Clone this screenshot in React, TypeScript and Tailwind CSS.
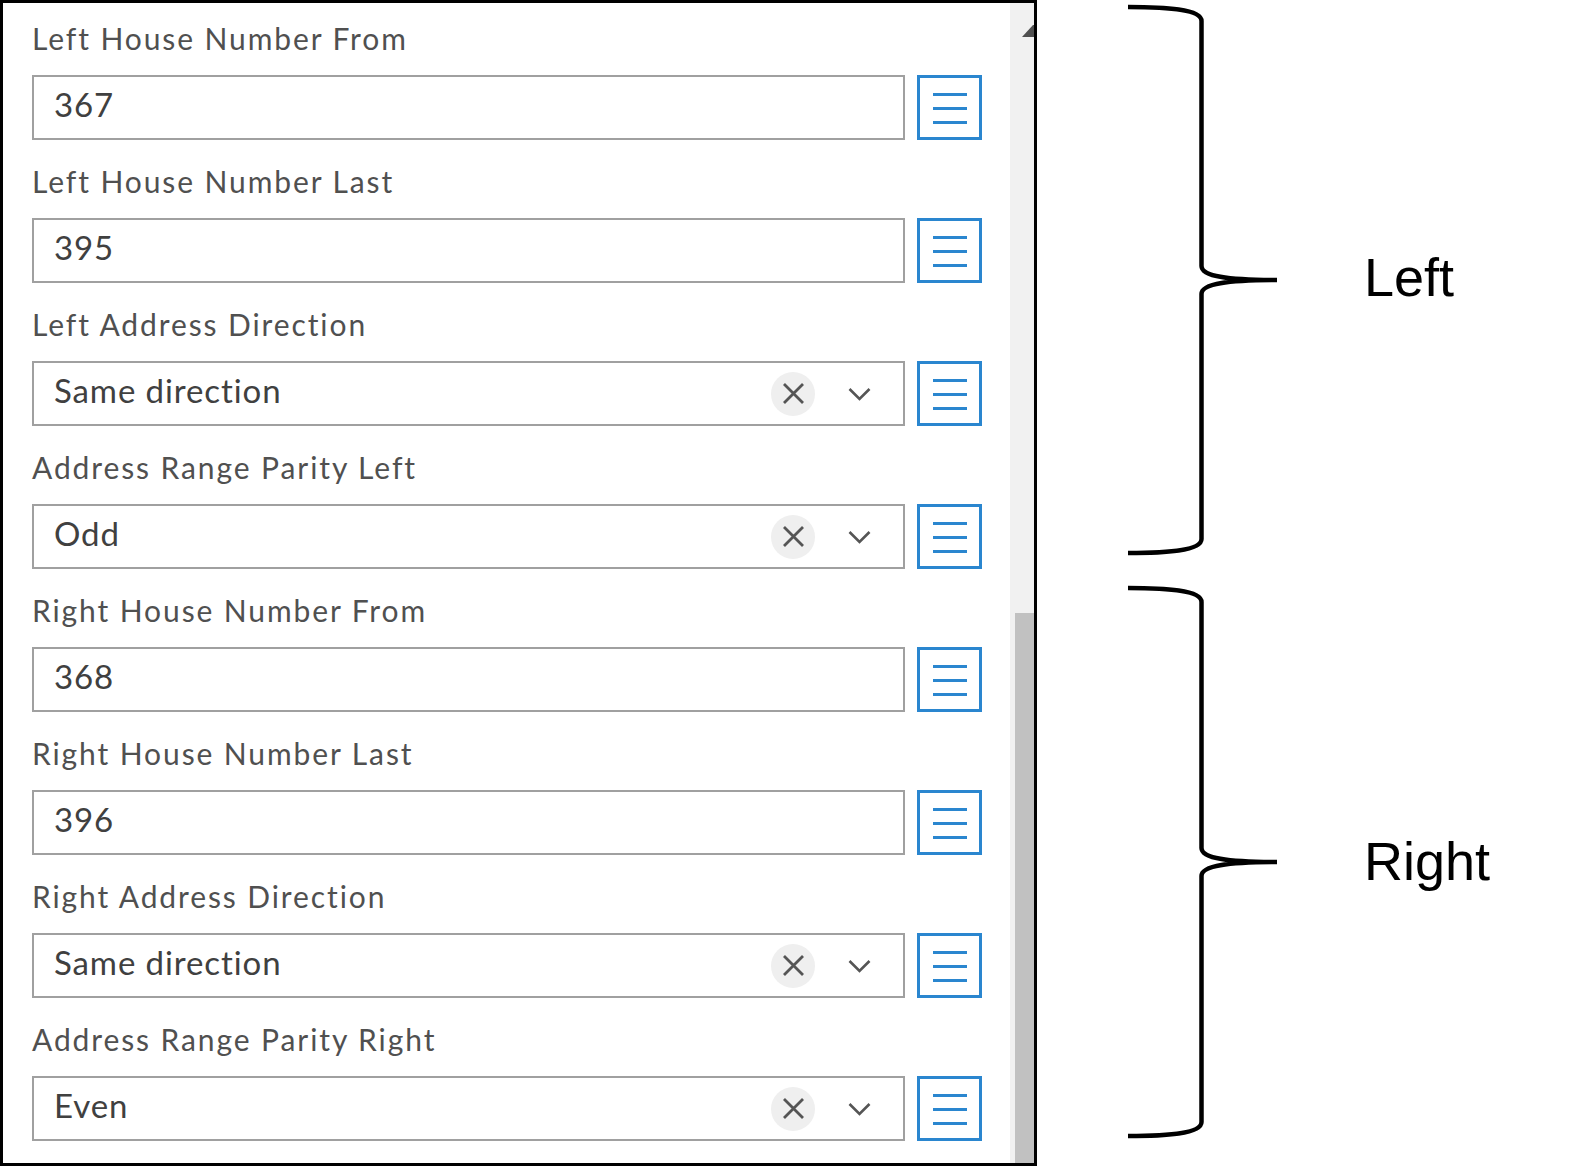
import React from "react";

interface Field {
    label: string;
    value: string;
    select?: boolean;
}

const fields: Field[] = [
    { label: "Left House Number From", value: "367" },
    { label: "Left House Number Last", value: "395" },
    { label: "Left Address Direction", value: "Same direction", select: true },
    { label: "Address Range Parity Left", value: "Odd", select: true },
    { label: "Right House Number From", value: "368" },
    { label: "Right House Number Last", value: "396" },
    { label: "Right Address Direction", value: "Same direction", select: true },
    { label: "Address Range Parity Right", value: "Even", select: true },
];

const MenuButton = () => (
    <div className="w-[65px] h-[65px] shrink-0 border-[3px] border-[#2a86cf] flex items-center justify-center">
        <svg width="34" height="31" viewBox="0 0 34 31" className="mt-[2px]">
            <path d="M0 1.5H34M0 15.5H34M0 29.5H34" stroke="#2a86cf" strokeWidth="3" />
        </svg>
    </div>
);

const SelectControls = () => (
    <div className="flex items-center ml-auto pr-[32px]">
        <div className="w-[44px] h-[44px] rounded-full bg-[#efefef] flex items-center justify-center">
            <svg width="23" height="23" viewBox="0 0 23 23">
                <path d="M2 2L21 21M21 2L2 21" stroke="#555" strokeWidth="2.8" />
            </svg>
        </div>
        <svg width="23" height="14" viewBox="0 0 23 14" className="ml-[33px]">
            <path d="M1.5 2L11.5 12L21.5 2" stroke="#555" strokeWidth="2.6" fill="none" />
        </svg>
    </div>
);

const FieldRow = ({ label, value, select }: Field) => (
    <div className="flex flex-col">
        <div className="h-[40px] flex items-center pb-[4px] text-[30px] text-[#505050] font-['Lato',sans-serif] tracking-[1.9px]">
            {label}
        </div>
        <div className="mt-[15px] flex gap-[12px]">
            <div className="flex-1 h-[65px] border-2 border-[#a0a0a0] flex items-center pl-[20px]">
                <span className="text-[33px] text-[#404040] font-['Lato',sans-serif] tracking-[0.9px] pb-[6px]">{value}</span>
                {select && <SelectControls />}
            </div>
            <MenuButton />
        </div>
    </div>
);

const Brace = ({ t, m, b }: { t: number; m: number; b: number }) => (
    <svg width="170" height="560" viewBox="0 0 170 560" className="shrink-0">
        <path
            d={`M8 ${t} C45 ${t} 81.5 ${t + 2} 81.5 ${t + 14} V ${m - 14} C81.5 ${m - 3} 110 ${m} 157 ${m} M157 ${m} C110 ${m} 81.5 ${m + 3} 81.5 ${m + 14} V ${b - 14} C81.5 ${b - 2} 45 ${b} 8 ${b}`}
            stroke="#000"
            strokeWidth="4.5"
            fill="none"
        />
    </svg>
);

const App = () => {
    return (
        <div className="w-[1581px] h-[1168px] bg-white flex items-start overflow-hidden">
            <div className="w-[1037px] h-[1166px] border-[3px] border-black flex shrink-0">
                <div className="flex-1 overflow-hidden pl-[29px] pr-[28px] pt-[17px] flex flex-col gap-[23px]">
                    {fields.map((f) => (
                        <FieldRow key={f.label} {...f} />
                    ))}
                </div>
                <div className="w-[24px] bg-[#f1f1f1] flex flex-col">
                    <svg width="24" height="12" viewBox="0 0 24 12" className="mt-[22px]">
                        <polygon points="12,12 23,0 24,0 24,12" fill="#505050" />
                    </svg>
                    <div className="mt-auto ml-[5px] h-[550px] bg-[#c1c1c1]"></div>
                </div>
            </div>

            <div className="flex flex-col">
                <div className="h-[560px] flex items-center ml-[83px]">
                    <Brace t={7} m={280} b={553} />
                    <span className="ml-[74px] pb-[7px] text-[54px] leading-none text-black font-['Liberation_Sans',Arial,sans-serif]">Left</span>
                </div>
                <div className="h-[560px] mt-[21px] flex items-center ml-[83px]">
                    <Brace t={7} m={281} b={555} />
                    <span className="ml-[74px] text-[54px] leading-none text-black font-['Liberation_Sans',Arial,sans-serif]">Right</span>
                </div>
            </div>
        </div>
    );
};

export default App;
